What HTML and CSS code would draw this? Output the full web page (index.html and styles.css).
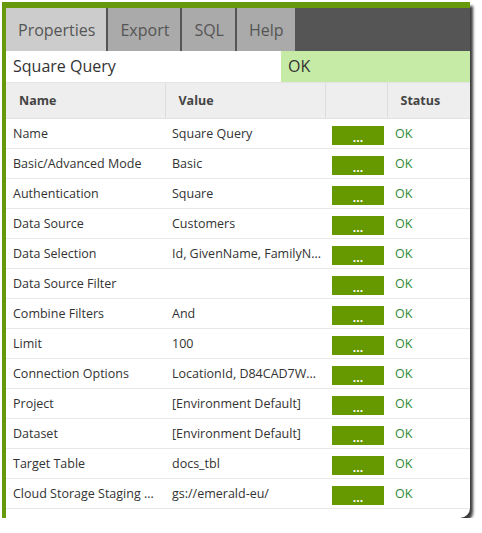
FILE: index.html
```html
<!DOCTYPE html>
<html lang="en">
<head>
    <meta charset="UTF-8" />
    <title>Square Query Properties</title>
    <link rel="stylesheet" href="styles.css">
</head>
<body>
    <div class="frame">
        <div class="tabs">
            <div class="tab active">Properties</div>
            <div class="tab">Export</div>
            <div class="tab">SQL</div>
            <div class="tab">Help</div>
        </div>
        <div class="title-row">
            <div class="title">Square Query</div>
            <div class="title-status">OK</div>
        </div>
        <table class="props">
            <thead>
                <tr>
                    <th class="col-name">Name</th>
                    <th class="col-value">Value</th>
                    <th class="col-btn"></th>
                    <th class="col-status">Status</th>
                </tr>
            </thead>
            <tbody>
                <tr><td>Name</td><td>Square Query</td><td><span class="btn">...</span></td><td class="ok">OK</td></tr>
                <tr><td>Basic/Advanced Mode</td><td>Basic</td><td><span class="btn">...</span></td><td class="ok">OK</td></tr>
                <tr><td>Authentication</td><td>Square</td><td><span class="btn">...</span></td><td class="ok">OK</td></tr>
                <tr><td>Data Source</td><td>Customers</td><td><span class="btn">...</span></td><td class="ok">OK</td></tr>
                <tr><td>Data Selection</td><td>Id, GivenName, FamilyN...</td><td><span class="btn">...</span></td><td class="ok">OK</td></tr>
                <tr><td>Data Source Filter</td><td></td><td><span class="btn">...</span></td><td class="ok">OK</td></tr>
                <tr><td>Combine Filters</td><td>And</td><td><span class="btn">...</span></td><td class="ok">OK</td></tr>
                <tr><td>Limit</td><td>100</td><td><span class="btn">...</span></td><td class="ok">OK</td></tr>
                <tr><td>Connection Options</td><td>LocationId, D84CAD7W...</td><td><span class="btn">...</span></td><td class="ok">OK</td></tr>
                <tr><td>Project</td><td>[Environment Default]</td><td><span class="btn">...</span></td><td class="ok">OK</td></tr>
                <tr><td>Dataset</td><td>[Environment Default]</td><td><span class="btn">...</span></td><td class="ok">OK</td></tr>
                <tr><td>Target Table</td><td>docs_tbl</td><td><span class="btn">...</span></td><td class="ok">OK</td></tr>
                <tr><td>Cloud Storage Staging ...</td><td>gs://emerald-eu/</td><td><span class="btn">...</span></td><td class="ok">OK</td></tr>
            </tbody>
        </table>
    </div>
</body>
</html>
```

FILE: styles.css
```css
body {
    margin: 0;
    padding: 0;
    background: #ffffff;
    font-family: "Open Sans", "Liberation Sans", sans-serif;
    color: #333333;
}

.frame {
    width: 464px;
    height: 510px;
    margin: 2px 0 0 2px;
    border-left: 4px solid #669a0c;
    border-top: 6px solid #669a0c;
    border-bottom-right-radius: 10px;
    background: #ffffff;
    box-shadow: 3px 4px 3px #3a3a3a;
    overflow: hidden;
}

.tabs {
    display: flex;
    height: 43px;
    background: #555555;
}

.tab {
    display: flex;
    align-items: center;
    padding: 0 11px 0 12px;
    background: #aaaaaa;
    color: #555555;
    font-size: 16px;
    margin-right: 2px;
}

.tab.active {
    background: #cccccc;
}

.title-row {
    display: flex;
    height: 31px;
    border-bottom: 1px solid #e4e4e4;
    font-size: 16px;
}

.title {
    width: 268px;
    padding-left: 7px;
    line-height: 31px;
}

.title-status {
    flex: 1;
    background: #c6eba6;
    padding-left: 7px;
    line-height: 31px;
}

.props {
    width: 464px;
    border-collapse: collapse;
    table-layout: fixed;
    font-size: 12.5px;
}

.props th {
    box-sizing: border-box;
    height: 35px;
    background: #eeeeee;
    color: #444444;
    text-align: left;
    font-weight: bold;
    padding: 0 0 0 13px;
    border-left: 1px solid #dddddd;
    border-bottom: 1px solid #e2e2e2;
    white-space: nowrap;
}

.props th:first-child {
    border-left: none;
}

.col-name { width: 159px; }
.col-value { width: 160px; }
.col-btn { width: 62px; }

.props td {
    box-sizing: border-box;
    height: 30px;
    padding: 0 0 0 7px;
    border-bottom: 1px solid #e8e8e8;
    white-space: nowrap;
    overflow: hidden;
    vertical-align: middle;
}

.props td.ok {
    color: #2f8a36;
    padding-left: 8px;
}

.btn {
    display: flex;
    justify-content: center;
    align-items: flex-end;
    width: 52px;
    height: 19px;
    margin-top: 4px;
    background: #669900;
    color: #ffffff;
    font-weight: bold;
    font-size: 12px;
    line-height: 12px;
    padding-bottom: 1px;
    box-sizing: border-box;
}
```
